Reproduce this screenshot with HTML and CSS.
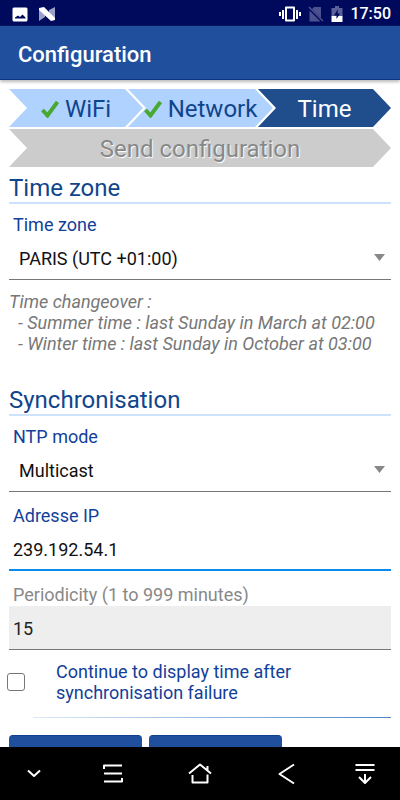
FILE: index.html
```html
<!DOCTYPE html>
<html lang="en">
<head>
<meta charset="utf-8">
<meta name="viewport" content="width=device-width, initial-scale=1">
<title>Configuration</title>
<link rel="stylesheet" href="styles.css">
</head>
<body>
<div class="status">
  <svg class="icon" width="16" height="16" viewBox="0 0 16 16" aria-hidden="true"><path fill="#fff" fill-rule="evenodd" d="M2 1.500h12a1.500 1.500 0 0 1 1.500 1.500v11a1.500 1.500 0 0 1-1.500 1.500H2A1.500 1.500 0 0 1 .5 14V3A1.500 1.500 0 0 1 2 1.500zM3 12.500h10.500v-1L10.500 8.500 8 11 6 9.500 3 11.500z"/></svg>
  <svg class="icon" width="18" height="16" viewBox="0 0 18 16" aria-hidden="true"><path fill="#9ba0c6" d="M1 3l6 5v3l-6 4zM11 4l6-3v12l-6-5z"/><path fill="#fff" d="M1 2l5-1 11 11v2l-4 1L1 4z"/></svg>
  <div class="status-right">
    <svg class="icon" width="22" height="18" viewBox="0 0 22 18" aria-hidden="true"><path fill="none" stroke="#fff" stroke-width="2" stroke-linejoin="round" d="M7 2.500h8v13H7zM4 5v9M18 5v9M1 7v4M21 7v4"/></svg>
    <svg class="icon" width="16" height="18" viewBox="0 0 16 18" aria-hidden="true"><path fill="#4c5190" d="M6 2h7v11L4 4zM1.500 5.500l11 11h-11z"/><path stroke="#4c5190" stroke-width="1.500" d="M1 2l14 14"/></svg>
    <svg class="icon" width="12" height="18" viewBox="0 0 12 18" aria-hidden="true"><path fill="#5b609a" d="M4 1h4v2h3.500v8H.5V3H4z"/><path fill="#fff" d="M.5 11h11v6H.5z"/><path fill="#000a5c" d="M7 4L3 10.500h2.500V14L9 8.500H6.500z"/></svg>
    <span class="clock">17:50</span>
  </div>
</div>
<header class="appbar"><h1>Configuration</h1></header>
<main class="content">
  <ol class="steps">
    <li class="step step-wifi"><svg class="check" width="18" height="18" viewBox="0 0 18 18" aria-hidden="true"><path d="M1.500 10l5 5.500L16.500 2"/></svg>WiFi</li>
    <li class="step step-network"><svg class="check" width="18" height="18" viewBox="0 0 18 18" aria-hidden="true"><path d="M1.500 10l5 5.500L16.500 2"/></svg>Network</li>
    <li class="step step-time">Time</li>
    <li class="step step-send">Send configuration</li>
  </ol>
  <section>
    <h2>Time zone</h2>
    <div class="field">
      <label for="zone">Time zone</label>
      <div class="picker"><select id="zone"><option>PARIS (UTC +01:00)</option></select></div>
    </div>
    <div class="note">
      <p>Time changeover :</p>
      <ul>
        <li>- Summer time : last Sunday in March at 02:00</li>
        <li>- Winter time : last Sunday in October at 03:00</li>
      </ul>
    </div>
  </section>
  <section class="sync">
    <h2>Synchronisation</h2>
    <div class="field">
      <label for="mode">NTP mode</label>
      <div class="picker"><select id="mode"><option>Multicast</option></select></div>
    </div>
    <div class="field">
      <label for="ip">Adresse IP</label>
      <input class="text active" id="ip" type="text" value="239.192.54.1">
    </div>
    <div class="field disabled">
      <label for="period">Periodicity (1 to 999 minutes)</label>
      <input class="text" id="period" type="text" value="15" disabled>
    </div>
    <div class="option">
      <input class="box" id="keep" type="checkbox">
      <label for="keep">Continue to display time after synchronisation failure</label>
    </div>
  </section>
  <hr class="rule">
  <div class="actions">
    <button type="button" aria-label="Previous"></button>
    <button type="button" aria-label="Next"></button>
  </div>
</main>
<nav class="navbar">
  <button type="button" aria-label="Hide"><svg width="24" height="24" viewBox="0 0 24 24"><path d="M6 8.500l6 5.500 6-5.500"/></svg></button>
  <button type="button" aria-label="Menu"><svg width="24" height="24" viewBox="0 0 24 24"><path d="M3 7V3.500h18M3 11.500h18M3 19.500h18V16"/></svg></button>
  <button type="button" aria-label="Home"><svg width="24" height="24" viewBox="0 0 24 24"><path d="M1 11.500L12 2.500l11 9M4.500 13v7.500h15V12.500M19.500 8.500V4"/></svg></button>
  <button type="button" aria-label="Back"><svg width="24" height="24" viewBox="0 0 24 24"><path d="M20 2.500L5.500 12 20 21.500"/></svg></button>
  <button type="button" aria-label="Notifications"><svg width="24" height="24" viewBox="0 0 24 24"><path d="M2.500 3h19M2.500 8h19M12 12v9M6 15l6 6 6-6"/></svg></button>
</nav>
</body>
</html>
```
FILE: styles.css
```css
* { box-sizing: border-box; }
body {
  margin: 0;
  height: 100vh;
  display: flex;
  flex-direction: column;
  background: #fff;
  color: #111;
  font: 18px/22px Roboto, sans-serif;
}
h1, h2, p, ul, ol { margin: 0; padding: 0; font-weight: 400; list-style: none; }
input, select, button { font: inherit; color: inherit; }

.status {
  flex: none;
  height: 26px;
  padding: 2px 9px 0 12px;
  display: flex;
  align-items: center;
  gap: 10px;
  background: #000a5c;
  color: #fff;
}
.icon { flex: none; }
.status-right { margin-left: auto; display: flex; align-items: center; gap: 7px; }
.clock { font-size: 16px; font-weight: 500; }

.appbar {
  flex: none;
  height: 54px;
  padding: 4px 18px 0;
  display: flex;
  align-items: center;
  background: #204f9e;
  border-bottom: 1px solid #0c3488;
  box-shadow: 0 2px 3px #bbb;
  color: #fff;
  z-index: 1;
}
.appbar h1 { font-size: 22px; font-weight: 500; line-height: 28px; }

.content {
  flex: 1;
  min-height: 0;
  padding: 9px 9px 0;
  overflow-y: auto;
  scrollbar-width: none;
}

.steps { display: flex; flex-wrap: wrap; row-gap: 2px; margin-bottom: 7px; }
.step {
  height: 38px;
  padding-top: 2px;
  display: flex;
  align-items: center;
  justify-content: center;
  gap: 6px;
  background: #b0d2ff;
  color: #10458c;
  font-size: 24px;
  line-height: 28px;
  clip-path: polygon(0 0, calc(100% - 18px) 0, 100% 50%, calc(100% - 18px) 100%, 0 100%, 18px 50%);
}
.step-wifi { flex: 134 1 0; }
.step-network { flex: 145 1 0; margin-left: -15px; }
.step-time { flex: 133 1 0; margin-left: -15px; background: #204d8b; color: #fff; }
.step-send { flex: 1 0 100%; background: #ccc; color: #888; text-shadow: 1px 1px 1px #fff; }
.check { flex: none; fill: none; stroke: #49a832; stroke-width: 4; }

h2 {
  font-size: 24px;
  line-height: 28px;
  color: #10458c;
  border-bottom: 2px solid #cde2fc;
}
.sync { margin-top: 31px; }
.field { padding-top: 13px; }
h2 + .field { padding-top: 10px; }
.field label { display: block; padding-left: 4px; color: #123f9a; }
.disabled label { color: #888; }

.picker { position: relative; }
.picker::after {
  content: "";
  position: absolute;
  right: 6px;
  top: 18px;
  width: 11px;
  height: 7px;
  background: #888;
  clip-path: polygon(0 0, 100% 0, 50% 100%);
  pointer-events: none;
}
select, .text {
  display: block;
  width: 100%;
  height: 44px;
  margin: 0;
  border: 0;
  border-bottom: 1px solid #777;
  border-radius: 0;
  background: none;
  appearance: none;
  outline: none;
}
select { padding: 2px 24px 0 10px; }
.text { padding: 2px 4px 0; }
.active { border-bottom: 2px solid #0b8bed; }
.text:disabled { background: #eee; color: #222; }

.note { padding-top: 11px; color: #777; font-style: italic; line-height: 21px; }
.note ul { padding-left: 9px; }
.note + * { margin-top: 1px; }
section + .sync { margin-top: 32px; }

.option { display: flex; align-items: center; padding-top: 11px; line-height: 21px; color: #123f9a; }
.option label { flex: 0 1 260px; }
.box {
  flex: none;
  appearance: none;
  width: 18px;
  height: 18px;
  margin: 0 31px 0 -2px;
  border: 1px solid #777;
  border-radius: 3px;
  background: #fff;
}
.rule {
  height: 1px;
  margin: 14px 0 17px 24px;
  border: 0;
  background: linear-gradient(to right, #dce9f8, #4d86c8);
}
.actions { display: flex; gap: 7px; }
.actions button {
  flex: 0 0 133px;
  height: 44px;
  border: 0;
  border-top: 1px solid #12408f;
  border-radius: 4px;
  background: #204f9e;
}

.navbar {
  flex: none;
  height: 53px;
  display: grid;
  grid-template-columns: 68fr 90fr 84fr 88fr 70fr;
  align-items: center;
  background: #000;
}
.navbar button { display: flex; justify-content: center; padding: 0; border: 0; background: none; }
.navbar svg { fill: none; stroke: #fff; stroke-width: 2; stroke-linejoin: round; }
```
